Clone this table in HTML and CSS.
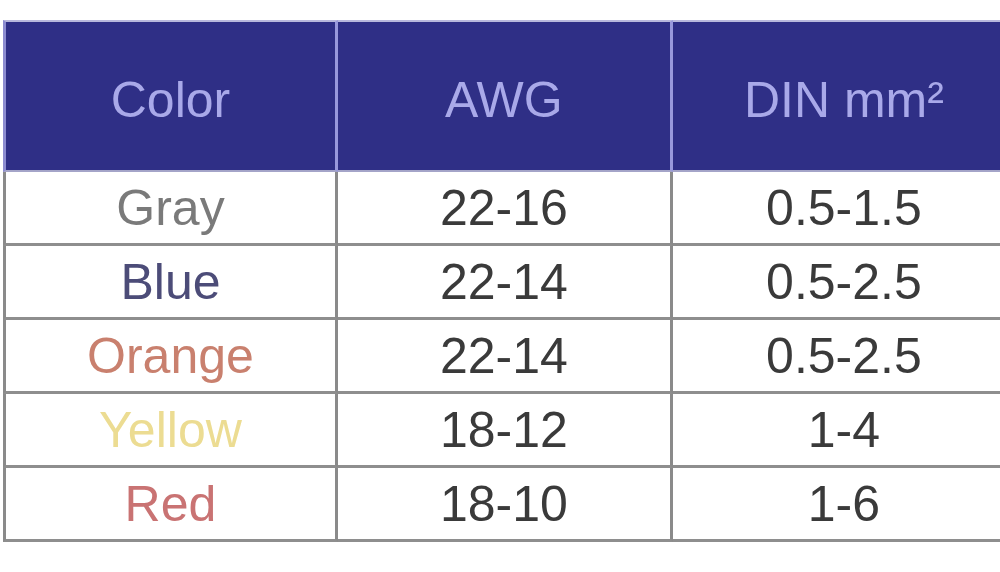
FILE: index.html
```html
<!DOCTYPE html>
<html>
<head>
<meta charset="utf-8">
<link rel="stylesheet" href="styles.css">
</head>
<body>
<div class="wrap">
  <table class="spec">
    <thead>
      <tr>
        <th class="c1">Color</th>
        <th class="c2">AWG</th>
        <th class="c3">DIN mm²</th>
      </tr>
    </thead>
    <tbody>
      <tr><td class="c1 gray">Gray</td><td class="c2">22-16</td><td class="c3">0.5-1.5</td></tr>
      <tr><td class="c1 blue">Blue</td><td class="c2">22-14</td><td class="c3">0.5-2.5</td></tr>
      <tr><td class="c1 orange">Orange</td><td class="c2">22-14</td><td class="c3">0.5-2.5</td></tr>
      <tr><td class="c1 yellow">Yellow</td><td class="c2">18-12</td><td class="c3">1-4</td></tr>
      <tr><td class="c1 red">Red</td><td class="c2">18-10</td><td class="c3">1-6</td></tr>
    </tbody>
  </table>
</div>
</body>
</html>
```

FILE: styles.css
```css
html, body {
  margin: 0;
  padding: 0;
  background: #ffffff;
}

.wrap {
  width: 1000px;
  height: 572px;
  overflow: hidden;
  padding: 20px 0 0 3px;
  box-sizing: border-box;
}

.spec {
  border-collapse: separate;
  border-spacing: 0;
  font-family: "Liberation Sans", Arial, sans-serif;
  font-size: 50px;
  width: 1015px;
  table-layout: fixed;
}

.spec th,
.spec td {
  padding: 0;
  text-align: center;
  vertical-align: middle;
  font-weight: normal;
}

.spec .c1 { width: 330px; }
.spec .c2 { width: 330px; }
.spec .c3 { width: 340px; }

.spec th {
  height: 152px;
  background: #2f2f86;
  color: #a9a9e9;
  border-top: 2px solid #b8b8dc;
  border-bottom: 2px solid #a4a4c8;
  border-right: 3px solid #9898dc;
  padding-top: 8px;
  box-sizing: border-box;
}

.spec th.c1 {
  border-left: 3px solid #8c8cd0;
}

.spec td {
  height: 71px;
  box-sizing: content-box;
  color: #3a3a3a;
  border-bottom: 3px solid #8e8e8e;
  border-right: 3px solid #8a8a8a;
  line-height: 1;
  padding: 0;
}

.spec td.c1 {
  border-left: 3px solid #8a8a8a;
}

.gray { color: #7a7a7a !important; }
.blue { color: #4c4c78 !important; }
.orange { color: #c9806e !important; }
.yellow { color: #ecdc92 !important; }
.red { color: #c97373 !important; }
```
